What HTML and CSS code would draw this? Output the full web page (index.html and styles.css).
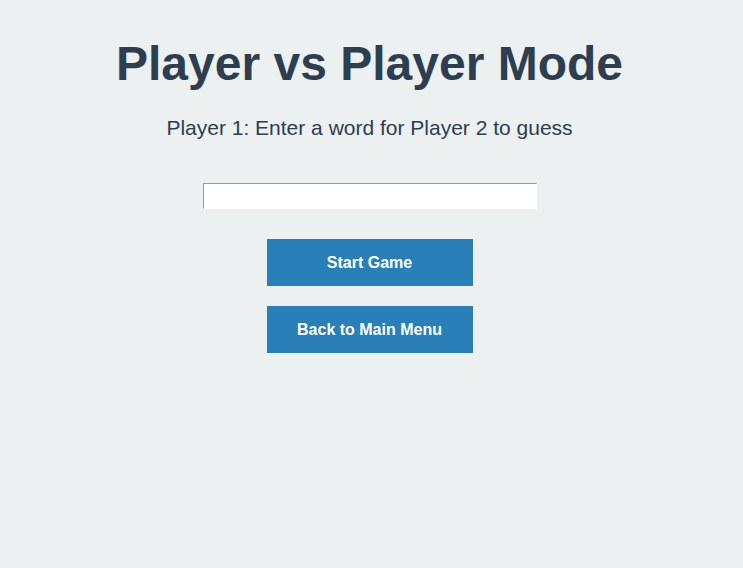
FILE: index.html
```html
<!DOCTYPE html>
<html>
<head>
<meta charset="utf-8">
<link rel="stylesheet" href="styles.css">
</head>
<body>
<div class="page">
  <h1 class="title">Player vs Player Mode</h1>
  <p class="subtitle">Player 1: Enter a word for Player 2 to guess</p>
  <input class="word-input" type="password">
  <button class="btn btn-first">Start Game</button>
  <button class="btn">Back to Main Menu</button>
</div>
</body>
</html>
```
FILE: styles.css
```css
html, body {
  margin: 0;
  padding: 0;
  background: #ecf0f1;
}
body {
  font-family: "Liberation Sans", Arial, sans-serif;
  color: #2c3e50;
}
.page {
  display: flex;
  flex-direction: column;
  align-items: center;
  padding-top: 36px;
  padding-right: 4px;
}
.title {
  margin: 0;
  font-size: 48px;
  font-weight: bold;
  line-height: 55px;
}
.subtitle {
  margin: 25px 0 0;
  font-size: 21px;
  line-height: 24px;
}
.word-input {
  margin-top: 43px;
  width: 334px;
  height: 26px;
  box-sizing: border-box;
  border-style: solid;
  border-width: 1px;
  border-color: #999 #fff #fff #999;
  background: #fff;
  padding: 0 4px;
  font-size: 16px;
  outline: none;
}
.btn {
  width: 206px;
  height: 47px;
  margin-top: 20px;
  border: none;
  background: #2980b9;
  color: #fff;
  font-family: "Liberation Sans", Arial, sans-serif;
  font-weight: bold;
  font-size: 16px;
  padding: 0;
}
.btn-first {
  margin-top: 30px;
}
```
